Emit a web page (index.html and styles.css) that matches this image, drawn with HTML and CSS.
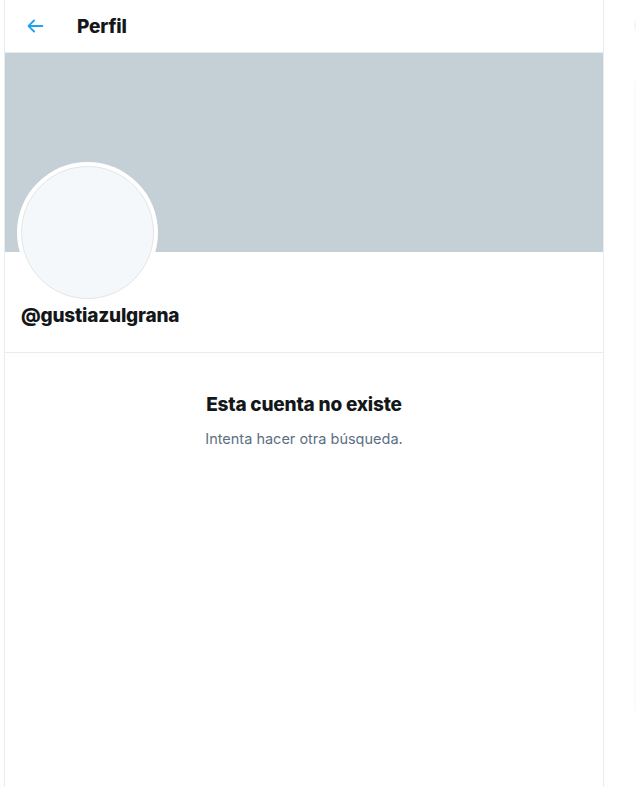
FILE: index.html
```html
<!DOCTYPE html>
<html lang="es">
<head>
<meta charset="utf-8">
<link rel="stylesheet" href="styles.css">
</head>
<body>
<div class="layout">
  <main class="column">
    <header class="topbar">
      <div class="back">
        <svg viewBox="0 0 24 24" class="back-icon"><path d="M20 11H7.414l4.293-4.293c.39-.39.39-1.023 0-1.414s-1.023-.39-1.414 0l-6 6c-.39.39-.39 1.023 0 1.414l6 6c.195.195.45.293.707.293s.512-.098.707-.293c.39-.39.39-1.023 0-1.414L7.414 13H20c.553 0 1-.447 1-1s-.447-1-1-1z"/></svg>
      </div>
      <h1 class="title">Perfil</h1>
    </header>
    <div class="banner"></div>
    <section class="profile">
      <div class="avatar"><div class="avatar-inner"></div></div>
      <div class="handle">@gustiazulgrana</div>
    </section>
    <section class="empty">
      <div class="empty-title">Esta cuenta no existe</div>
      <div class="empty-sub">Intenta hacer otra búsqueda.</div>
    </section>
  </main>
  <aside class="sidebar">
    <div class="search"></div>
    <div class="card"></div>
  </aside>
</div>
</body>
</html>
```
FILE: styles.css
```css
html, body {
  margin: 0;
  padding: 0;
  background: #ffffff;
  font-family: "Inter", "Liberation Sans", "Noto Sans", sans-serif;
  color: #14171a;
}
.layout {
  display: flex;
  height: 787px;
  overflow: hidden;
}
.column {
  margin-left: 4px;
  width: 598px;
  min-height: 787px;
  border-left: 1px solid #e6ecf0;
  border-right: 1px solid #e6ecf0;
  flex-shrink: 0;
}
.topbar {
  height: 52px;
  border-bottom: 1px solid #e6ecf0;
  display: flex;
  align-items: center;
}
.back {
  width: 72px;
  display: flex;
  align-items: center;
  padding-left: 19px;
  box-sizing: border-box;
}
.back-icon {
  width: 22px;
  height: 22px;
  fill: #1da1f2;
}
.title {
  margin: 0;
  font-size: 19px;
  font-weight: 800;
  letter-spacing: -0.2px;
}
.banner {
  height: 199px;
  background: #c4cfd6;
}
.profile {
  display: flow-root;
  padding: 0 16px;
  height: 100px;
  border-bottom: 1px solid #e6ecf0;
}
.avatar {
  width: 141px;
  height: 141px;
  border-radius: 50%;
  background: #ffffff;
  margin-top: -90px;
  margin-left: -4px;
  box-sizing: border-box;
  padding: 4px;
}
.avatar-inner {
  width: 100%;
  height: 100%;
  border-radius: 50%;
  background: #f5f8fa;
  border: 1px solid #e1e6ea;
  box-sizing: border-box;
}
.handle {
  margin-top: 1px;
  font-size: 19px;
  font-weight: 800;
  line-height: 24px;
  letter-spacing: -0.2px;
}
.empty {
  padding-top: 40px;
  display: flex;
  flex-direction: column;
  align-items: center;
}
.empty-title {
  font-size: 19px;
  font-weight: 800;
  line-height: 24px;
  letter-spacing: -0.2px;
}
.empty-sub {
  margin-top: 12px;
  font-size: 14.5px;
  line-height: 20px;
  color: #5b7083;
}
.sidebar {
  margin-left: 30px;
  width: 350px;
  flex-shrink: 0;
  padding-top: 15px;
}
.search {
  height: 22px;
  border-radius: 11px;
  background: #f2f5f7;
}
.card {
  margin-top: 34px;
  height: 650px;
  border-radius: 14px;
  background: #f8fafb;
}
```
